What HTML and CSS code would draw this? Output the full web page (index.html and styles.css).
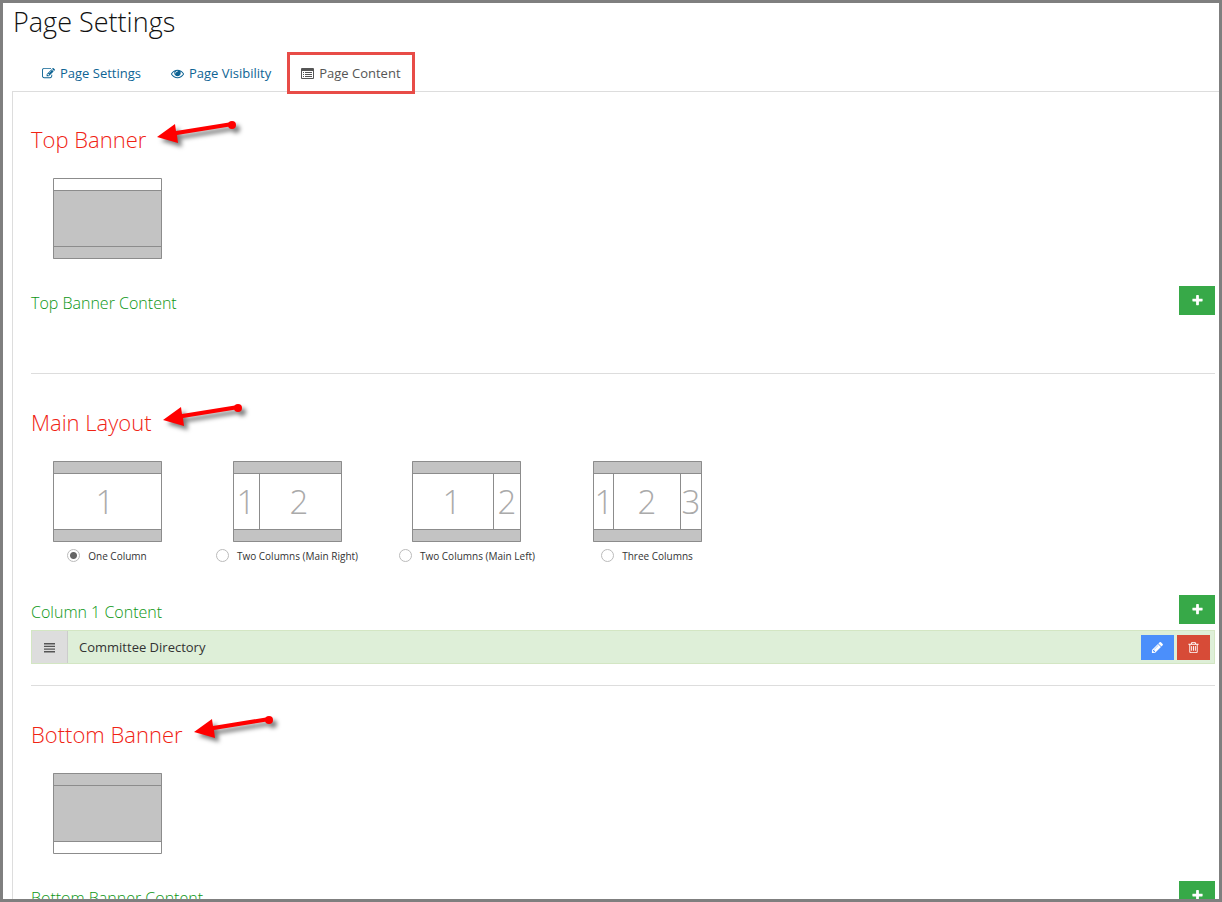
FILE: index.html
```html
<!DOCTYPE html>
<html lang="en">
<head>
  <meta charset="UTF-8" />
  <meta name="viewport" content="width=device-width, initial-scale=1.0"/>
  <title>Page Settings</title>
  <link rel="stylesheet" href="styles.css">
</head>
<body>
  <!-- Shared icons -->
  <svg class="sprite" aria-hidden="true">
    <symbol id="icon-edit" viewBox="0 0 1792 1792">
      <path d="M888 1184l116-116-152-152-116 116v56h96v96h56zm440-720q-16-16-33 1l-350 350q-17 17-1 33t33-1l350-350q17-17 1-33zm80 594v190q0 119-84.5 203.5t-203.5 84.5h-832q-119 0-203.5-84.5t-84.5-203.5v-832q0-119 84.5-203.5t203.5-84.5h832q63 0 117 25 15 7 18 23 3 17-9 29l-49 49q-14 14-32 8-23-6-45-6h-832q-66 0-113 47t-47 113v832q0 66 47 113t113 47h832q66 0 113-47t47-113v-126q0-13 9-22l64-64q15-15 35-7t20 29zm-96-738l288 288-672 672h-288v-288zm444 132l-92 92-288-288 92-92q28-28 68-28t68 28l152 152q28 28 28 68t-28 68z"/>
    </symbol>
    <symbol id="icon-eye" viewBox="0 0 1792 1792">
      <path d="M1664 960q-152-236-381-353 61 104 61 225 0 185-131.5 316.5t-316.5 131.5-316.5-131.5-131.5-316.5q0-121 61-225-229 117-381 353 133 205 333.5 326.5t434.5 121.5 434.5-121.5 333.5-326.5zm-720-384q0-20-14-34t-34-14q-125 0-214.5 89.5t-89.5 214.5q0 20 14 34t34 14 34-14 14-34q0-86 61-147t147-61q20 0 34-14t14-34zm848 384q0 34-20 69-140 230-376.5 368.5t-499.5 138.5-499.5-139-376.5-368q-20-35-20-69t20-69q140-229 376.5-368t499.5-139 499.5 139 376.5 368q20 35 20 69z"/>
    </symbol>
    <symbol id="icon-list" viewBox="0 0 13 13">
      <path fill-rule="evenodd" d="M1 1h11q1 0 1 1v9q0 1-1 1H1q-1 0-1-1V2q0-1 1-1zM1 4v7h11V4z"/>
      <path d="M2 5h1v1H2zm2 0h7v1H4zM2 7h1v1H2zm2 0h7v1H4zM2 9h1v1H2zm2 0h7v1H4z"/>
    </symbol>
    <symbol id="icon-plus" viewBox="0 0 1792 1792">
      <path d="M1600 736v192q0 40-28 68t-68 28h-416v416q0 40-28 68t-68 28h-192q-40 0-68-28t-28-68v-416h-416q-40 0-68-28t-28-68v-192q0-40 28-68t68-28h416v-416q0-40 28-68t68-28h192q40 0 68 28t28 68v416h416q40 0 68 28t28 68z"/>
    </symbol>
    <symbol id="icon-pencil" viewBox="0 0 1792 1792">
      <path d="M491 1536l91-91-235-235-91 91v107h128v128h107zm523-928q0-22-22-22-10 0-17 7l-542 542q-7 7-7 17 0 22 22 22 10 0 17-7l542-542q7-7 7-17zm-54-192l416 416-832 832h-416v-416zm683 96q0 53-37 90l-166 166-416-416 166-165q36-38 90-38 53 0 91 38l235 234q37 39 37 91z"/>
    </symbol>
    <symbol id="icon-trash" viewBox="0 0 1792 1792">
      <path d="M704 736v576q0 14-9 23t-23 9h-64q-14 0-23-9t-9-23v-576q0-14 9-23t23-9h64q14 0 23 9t9 23zm256 0v576q0 14-9 23t-23 9h-64q-14 0-23-9t-9-23v-576q0-14 9-23t23-9h64q14 0 23 9t9 23zm256 0v576q0 14-9 23t-23 9h-64q-14 0-23-9t-9-23v-576q0-14 9-23t23-9h64q14 0 23 9t9 23zm128 724v-948h-896v948q0 22 7 40.5t14.5 27 10.5 8.5h832q3 0 10.5-8.5t14.5-27 7-40.5zm-672-1076h448l-48-117q-7-9-17-11h-317q-10 2-17 11zm928 32v64q0 14-9 23t-23 9h-96v948q0 83-47 143.5t-113 60.5h-832q-66 0-113-58.5t-47-141.5v-952h-96q-14 0-23-9t-9-23v-64q0-14 9-23t23-9h309l70-167q15-37 54-63t79-26h320q40 0 79 26t54 63l70 167h309q14 0 23 9t9 23z"/>
    </symbol>
    <symbol id="icon-bars" viewBox="0 0 13 13">
      <path d="M1 2h11v1.400H1zm0 2.700h11v1.400H1zm0 2.700h11v1.400H1zm0 2.700h11v1.400H1z"/>
    </symbol>
    <symbol id="icon-arrow" viewBox="0 0 90 32">
      <path d="M0 16L18 3l1 7 56-9 1 4-56 9 1 8z"/>
      <circle cx="75" cy="4" r="4"/>
    </symbol>
  </svg>

  <h1>Page Settings</h1>

  <nav class="tabs">
    <a href="#settings"><svg class="icon"><use href="#icon-edit"/></svg>Page Settings</a>
    <a href="#visibility"><svg class="icon"><use href="#icon-eye"/></svg>Page Visibility</a>
    <a href="#content" class="active"><svg class="icon"><use href="#icon-list"/></svg>Page Content</a>
  </nav>

  <main class="panel" id="content">
    <section>
      <h2>Top Banner <svg class="arrow"><use href="#icon-arrow"/></svg></h2>
      <div class="layouts">
        <svg class="thumb" viewBox="0 0 109 81">
          <rect class="fill" x="0" y="12" width="109" height="69"/>
          <path class="line" d="M0.5 0.5h108v80H0.5zM0 12.5h109M0 68.5h109"/>
        </svg>
      </div>
      <div class="content-head">
        <h3>Top Banner Content</h3>
        <button type="button" class="add" aria-label="Add top banner content"><svg class="icon"><use href="#icon-plus"/></svg></button>
      </div>
      <ul class="content-list"></ul>
    </section>

    <section>
      <h2>Main Layout <svg class="arrow"><use href="#icon-arrow"/></svg></h2>
      <div class="layouts">
        <label>
          <svg class="thumb" viewBox="0 0 109 81">
            <path class="fill" d="M0 0h109v12H0zM0 69h109v12H0z"/>
            <path class="line" d="M0.5 0.5h108v80H0.5zM0 12.5h109M0 68.5h109"/>
            <text x="52" y="53">1</text>
          </svg>
          <span class="option"><input type="radio" name="layout" checked>One Column</span>
        </label>
        <label>
          <svg class="thumb" viewBox="0 0 109 81">
            <path class="fill" d="M0 0h109v12H0zM0 69h109v12H0z"/>
            <path class="line" d="M0.5 0.5h108v80H0.5zM0 12.5h109M0 68.5h109M26.5 12v57"/>
            <text x="13" y="53">1</text>
            <text x="66" y="53">2</text>
          </svg>
          <span class="option"><input type="radio" name="layout">Two Columns (Main Right)</span>
        </label>
        <label>
          <svg class="thumb" viewBox="0 0 109 81">
            <path class="fill" d="M0 0h109v12H0zM0 69h109v12H0z"/>
            <path class="line" d="M0.5 0.5h108v80H0.5zM0 12.5h109M0 68.5h109M81.5 12v57"/>
            <text x="40" y="53">1</text>
            <text x="95" y="53">2</text>
          </svg>
          <span class="option"><input type="radio" name="layout">Two Columns (Main Left)</span>
        </label>
        <label>
          <svg class="thumb" viewBox="0 0 109 81">
            <path class="fill" d="M0 0h109v12H0zM0 69h109v12H0z"/>
            <path class="line" d="M0.5 0.5h108v80H0.5zM0 12.5h109M0 68.5h109M20.5 12v57M87.5 12v57"/>
            <text x="11" y="53">1</text>
            <text x="54" y="53">2</text>
            <text x="98" y="53">3</text>
          </svg>
          <span class="option"><input type="radio" name="layout">Three Columns</span>
        </label>
      </div>
      <div class="content-head">
        <h3>Column 1 Content</h3>
        <button type="button" class="add" aria-label="Add column content"><svg class="icon"><use href="#icon-plus"/></svg></button>
      </div>
      <ul class="content-list">
        <li>
          <span class="handle"><svg class="icon"><use href="#icon-bars"/></svg></span>
          <span class="name">Committee Directory</span>
          <button type="button" class="edit" aria-label="Edit"><svg class="icon"><use href="#icon-pencil"/></svg></button>
          <button type="button" class="delete" aria-label="Delete"><svg class="icon"><use href="#icon-trash"/></svg></button>
        </li>
      </ul>
    </section>

    <section>
      <h2>Bottom Banner <svg class="arrow"><use href="#icon-arrow"/></svg></h2>
      <div class="layouts">
        <svg class="thumb" viewBox="0 0 109 81">
          <rect class="fill" x="0" y="0" width="109" height="69"/>
          <path class="line" d="M0.5 0.5h108v80H0.5zM0 12.5h109M0 68.5h109"/>
        </svg>
      </div>
      <div class="content-head">
        <h3>Bottom Banner Content</h3>
        <button type="button" class="add" aria-label="Add bottom banner content"><svg class="icon"><use href="#icon-plus"/></svg></button>
      </div>
      <ul class="content-list"></ul>
    </section>
  </main>
</body>
</html>
```

FILE: styles.css
```css
* {
  box-sizing: border-box;
}
body {
  font-family: 'Open Sans', sans-serif;
  font-size: 13px;
  color: #333;
  background-color: #fff;
  margin: 0;
  height: 100vh;
  overflow: hidden;
  border: 3px solid #7f7f7f;
}
.sprite {
  display: none;
}
h1, h2, h3 {
  font-weight: 300;
  margin: 0;
}
h1 {
  font-size: 27px;
  line-height: 38px;
  padding-left: 10px;
  color: #111;
}
.icon {
  width: 13px;
  height: 13px;
  fill: currentColor;
  flex: none;
}

/* Tabs */
.tabs {
  display: flex;
  gap: 2px;
  margin: 11px 0 -3px;
  padding-left: 25px;
  position: relative;
}
.tabs a {
  display: flex;
  align-items: center;
  gap: 5px;
  height: 42px;
  padding: 0 14px;
  color: #0e6494;
  text-decoration: none;
}
.tabs a.active {
  color: #555;
  background: #fff;
  border: 3px solid #e84c47;
  padding: 0 11px;
}
.panel {
  margin-left: 9px;
  padding: 0 4px 0 18px;
  border: 1px solid #ddd;
  border-right: none;
}

/* Sections */
section {
  padding-top: 33px;
  padding-bottom: 21px;
  border-bottom: 1px solid #ddd;
}
section + section {
  margin-top: 1px;
}
h2 {
  display: flex;
  gap: 11px;
  height: 32px;
  line-height: 28px;
  font-size: 22px;
  color: #f02314;
}
.arrow {
  width: 90px;
  height: 32px;
  margin-top: -4px;
  overflow: visible;
  fill: #f00;
  filter: drop-shadow(4px 4px 2px rgba(0,0,0,0.5));
}
.layouts {
  display: grid;
  grid-template-columns: repeat(auto-fill, 152px);
  justify-items: center;
  gap: 28px;
  margin: 21px 0 27px;
}
.layouts label {
  display: flex;
  flex-direction: column;
  align-items: center;
  gap: 4px;
  font-size: 10px;
  white-space: nowrap;
}
.thumb {
  display: block;
  width: 109px;
  height: 81px;
}
.thumb .fill {
  fill: #c3c3c3;
}
.thumb .line {
  fill: none;
  stroke: #8c8c8c;
}
.thumb text {
  font-size: 33px;
  font-weight: 300;
  fill: #aaa;
  text-anchor: middle;
}
.option {
  display: flex;
  align-items: center;
  gap: 8px;
  height: 22px;
  padding-bottom: 3px;
}
.option input {
  appearance: none;
  width: 13px;
  height: 13px;
  margin: 0;
  border: 1px solid #bbb;
  border-radius: 50%;
}
.option input:checked {
  background: radial-gradient(circle, #666 3px, #fff 4px);
}

/* Content lists */
.content-head {
  display: flex;
  justify-content: space-between;
  margin-bottom: 6px;
}
h3 {
  font-size: 16px;
  line-height: 34px;
  height: 29px;
  color: #0c9614;
}
button {
  display: flex;
  align-items: center;
  justify-content: center;
  padding: 0;
  border: none;
  color: #fff;
  cursor: pointer;
}
.add {
  width: 36px;
  height: 29px;
  background: #37a948;
}
.content-list {
  list-style: none;
  margin: 0;
  padding: 0;
  min-height: 31px;
}
.content-list li {
  display: flex;
  align-items: center;
  gap: 3px;
  height: 34px;
  padding-right: 4px;
  background: #deefd8;
  border: 1px solid #d3e6c3;
}
.handle {
  display: flex;
  align-items: center;
  justify-content: center;
  width: 36px;
  height: 32px;
  background: #ddd;
  color: #555;
  border-right: 1px solid #ccc;
}
.name {
  flex: 1;
  padding-left: 8px;
}
.edit, .delete {
  width: 33px;
  height: 25px;
}
.edit {
  background: #4b8ffb;
}
.delete {
  background: #d74b37;
}
```
